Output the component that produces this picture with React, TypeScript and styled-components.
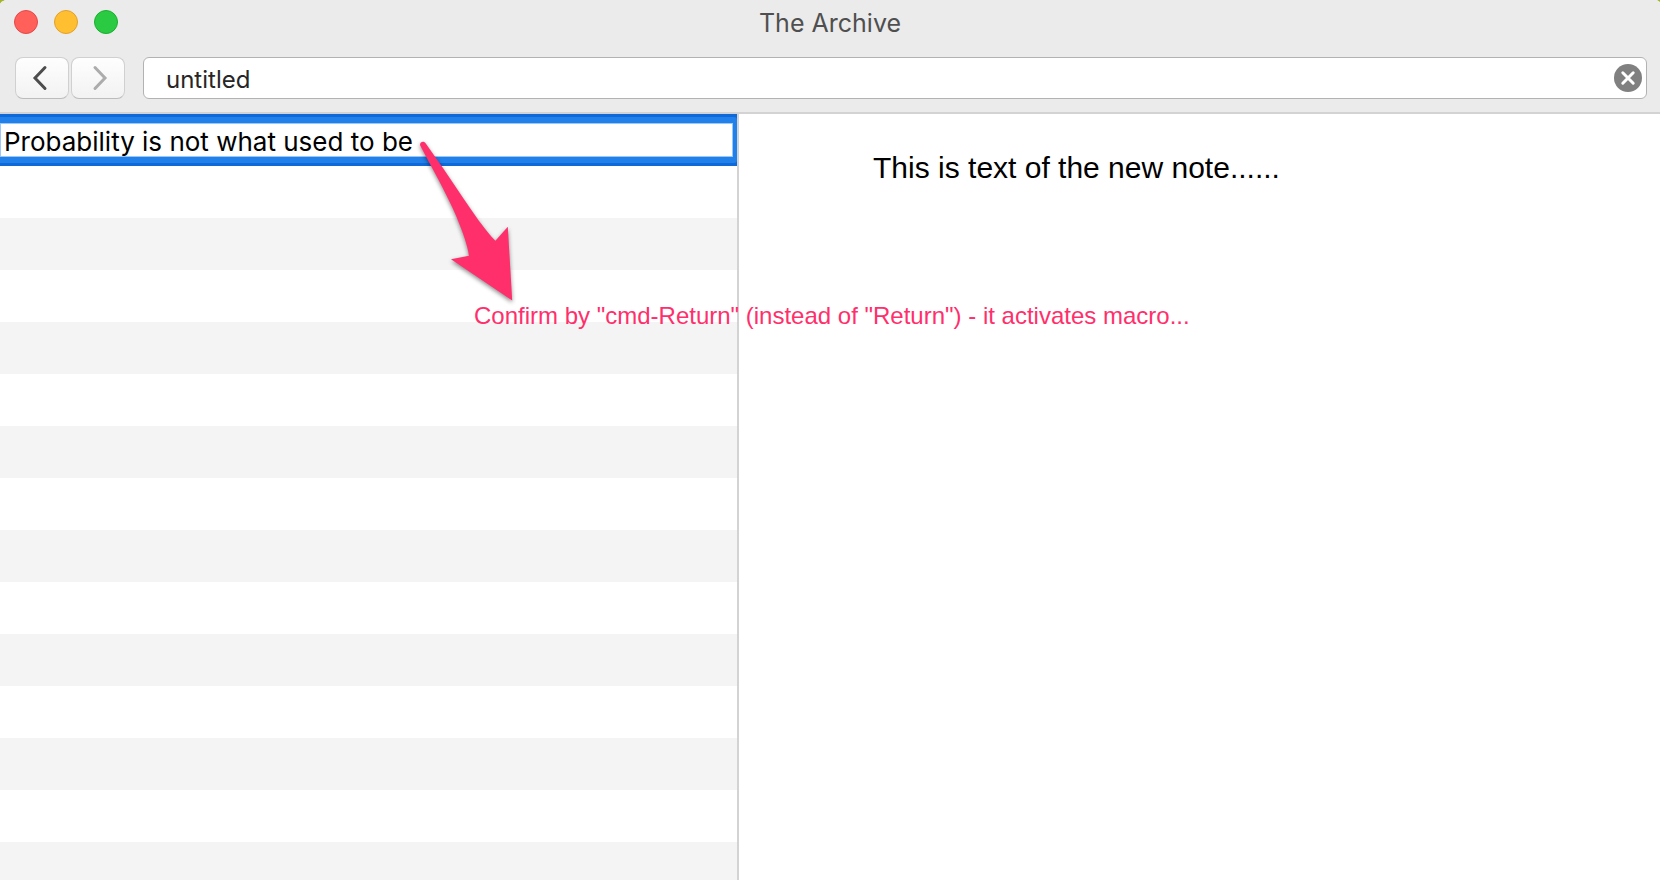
import React, { useState } from "react";
import styled, { createGlobalStyle } from "styled-components";

const GlobalStyle = createGlobalStyle`
  *, *::before, *::after { box-sizing: border-box; }
  body { margin: 0; background: #a3b42c; }
`;

const systemFont = `Inter, "Liberation Sans", sans-serif`;
const noteFont = `"Liberation Sans", Arial, sans-serif`;

const Window = styled.div`
  position: relative;
  display: flex;
  flex-direction: column;
  height: 100vh;
  overflow: hidden;
  border-radius: 8px 5px 0 0 / 5px 3px 0 0;
  background: #fff;
  font-family: ${systemFont};
`;

const Header = styled.header`
  flex: none;
  background: #ebebeb;
  border-bottom: 2px solid #d3d3d3;
`;

const TitleBar = styled.div`
  display: grid;
  grid-template-columns: 1fr auto 1fr;
  align-items: center;
  height: 44px;
  padding: 0 14px;
`;

const WindowControls = styled.div`
  display: flex;
  gap: 16px;
`;

const ControlDot = styled.button<{ $fill: string; $edge: string }>`
  width: 24px;
  height: 24px;
  padding: 0;
  border: 1px solid ${(p) => p.$edge};
  border-radius: 50%;
  background: ${(p) => p.$fill};
`;

const Title = styled.h1`
  margin: 0;
  padding-top: 2px;
  font-size: 25px;
  font-weight: 400;
  line-height: 30px;
  color: #4f4f4f;
`;

const Toolbar = styled.div`
  display: flex;
  align-items: center;
  gap: 18px;
  padding: 13px 13px 13px 15px;
`;

const NavGroup = styled.nav`
  display: flex;
  gap: 2px;
`;

const NavButton = styled.button`
  display: grid;
  place-items: center;
  width: 54px;
  height: 42px;
  padding: 0;
  border: 1px solid #d0d0d0;
  border-bottom-color: #bcbcbc;
  border-radius: 8px;
  background: linear-gradient(#fefefe, #f2f2f2);
  color: #4d4d4d;

  &:disabled {
    color: #acacac;
  }
`;

const SearchBox = styled.div`
  display: flex;
  flex: 1;
  align-items: center;
  height: 42px;
  padding: 0 4px 0 22px;
  border: 1px solid #b2b2b2;
  border-radius: 6px;
  background: #fff;
`;

const SearchInput = styled.input`
  flex: 1;
  min-width: 0;
  padding: 3px 0 0;
  border: 0;
  outline: 0;
  background: none;
  font: 400 24px/30px ${systemFont};
  color: #262626;
`;

const ClearButton = styled.button`
  display: grid;
  width: 28px;
  height: 28px;
  padding: 0;
  border: 0;
  background: none;
`;

const Panes = styled.main`
  display: flex;
  flex: 1;
  min-height: 0;
`;

const NoteList = styled.ul`
  flex: 0 0 44.4%;
  margin: 0;
  padding: 0;
  overflow: hidden;
  list-style: none;
`;

const NoteRow = styled.li`
  height: 52px;

  &:nth-child(odd) {
    background: #f4f4f4;
  }
`;

const SelectedRow = styled.li`
  display: flex;
  height: 52px;
  border: solid #1069d8;
  border-width: 3px 0;
  background: #1069d8;
`;

const FocusRing = styled.div`
  display: flex;
  flex: 1;
  padding: 6px 4px 6px 0;
  border-radius: 0 3px 3px 0;
  background: #2180e9;
`;

const NameInput = styled.input`
  flex: 1;
  min-width: 0;
  height: 34px;
  padding: 2px 3px 0;
  border: 1px solid #9bc8f8;
  outline: 0;
  background: #fff;
  font: 400 26px/30px ${systemFont};
  color: #000;
`;

const Editor = styled.textarea`
  flex: 1;
  min-width: 0;
  padding: 36px 134px;
  border: 0;
  border-left: 2px solid #d3d3d3;
  outline: 0;
  resize: none;
  background: #fff;
  font: 400 30px/36px ${noteFont};
  color: #000;
`;

/* Callout floating over both panes */
const Arrow = styled.svg`
  position: absolute;
  left: 410px;
  top: 130px;
  overflow: visible;
  pointer-events: none;
  filter: drop-shadow(0 2px 2px rgba(0, 0, 0, 0.45));
`;

const Callout = styled.p`
  position: absolute;
  left: 474px;
  top: 302px;
  margin: 0;
  font: 400 24px/28px ${noteFont};
  color: #ff2f6c;
  white-space: nowrap;
  pointer-events: none;
`;

const controls = [
  { label: "Close window", fill: "#ff605a", edge: "#e5484a" },
  { label: "Minimize window", fill: "#ffbf30", edge: "#e2a02c" },
  { label: "Zoom window", fill: "#2acb42", edge: "#1aae30" },
];

const emptyRows = Array.from({ length: 14 }, (_, i) => i);

function Chevron({ points }: { points: string }) {
  return (
    <svg width="20" height="26" viewBox="0 0 20 26" fill="none" stroke="currentColor" strokeWidth="3" strokeLinecap="round" aria-hidden="true">
      <polyline points={points} />
    </svg>
  );
}

export default function App() {
  const [query, setQuery] = useState("untitled");
  const [name, setName] = useState("Probability is not what used to be");
  const [text, setText] = useState("This is text of the new note......");

  return (
    <Window>
      <GlobalStyle />
      <Header>
        <TitleBar>
          <WindowControls>
            {controls.map((c) => (
              <ControlDot key={c.label} type="button" aria-label={c.label} $fill={c.fill} $edge={c.edge} />
            ))}
          </WindowControls>
          <Title>The Archive</Title>
        </TitleBar>
        <Toolbar>
          <NavGroup aria-label="History">
            <NavButton type="button" aria-label="Back">
              <Chevron points="13,2.5 3,13 13,23.5" />
            </NavButton>
            <NavButton type="button" aria-label="Forward" disabled>
              <Chevron points="7,2.5 17,13 7,23.5" />
            </NavButton>
          </NavGroup>
          <SearchBox>
            <SearchInput aria-label="Search notes" value={query} onChange={(e) => setQuery(e.target.value)} />
            <ClearButton type="button" aria-label="Clear search" onClick={() => setQuery("")}>
              <svg width="28" height="28" viewBox="0 0 28 28" aria-hidden="true">
                <circle cx="14" cy="14" r="14" fill="#808080" />
                <path d="M8.8 8.8 19.2 19.2M19.2 8.8 8.8 19.2" stroke="#fff" strokeWidth="3" strokeLinecap="round" />
              </svg>
            </ClearButton>
          </SearchBox>
        </Toolbar>
      </Header>
      <Panes>
        <NoteList>
          <SelectedRow>
            <FocusRing>
              <NameInput aria-label="Note name" value={name} onChange={(e) => setName(e.target.value)} />
            </FocusRing>
          </SelectedRow>
          {emptyRows.map((i) => (
            <NoteRow key={i} />
          ))}
        </NoteList>
        <Editor aria-label="Note text" value={text} onChange={(e) => setText(e.target.value)} />
      </Panes>
      <Arrow width="110" height="180" viewBox="410 130 110 180" aria-hidden="true">
        <path
          fill="#ff2f6c"
          d="M420.2 145.5C419.2 142.5 423.2 140.3 425.4 143L443.3 168.5L463.3 198.3C472 211 485 230.5 495.4 240.7L507.8 226.7L512.2 300.6L451 259.3L469 255.7C468 245 459 222 452.7 208.3C445 191 433 170 420.2 145.5Z"
        />
      </Arrow>
      <Callout>Confirm by "cmd-Return" (instead of "Return") - it activates macro...</Callout>
    </Window>
  );
}
